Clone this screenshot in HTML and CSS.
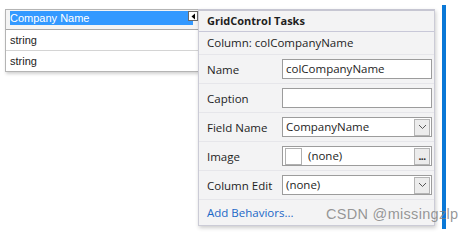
FILE: index.html
```html
<!DOCTYPE html>
<html>
<head>
<meta charset="utf-8">
<link rel="stylesheet" href="styles.css">
</head>
<body>
<div class="stage">
  <div class="grid">
    <div class="grid-head">
      <span class="head-sel">Company Name</span>
      <span class="smart-tag"><svg width="7" height="7" viewBox="0 0 7 7"><path d="M5 0.5 L1.5 3.5 L5 6.5 Z" fill="#000"/></svg></span>
    </div>
    <div class="grid-row">string</div>
    <div class="grid-row">string</div>
  </div>
  <div class="panel">
    <div class="panel-title">GridControl Tasks</div>
    <div class="panel-sub">Column: colCompanyName</div>
    <div class="prow">
      <span class="plabel">Name</span>
      <div class="field">colCompanyName</div>
    </div>
    <div class="prow">
      <span class="plabel">Caption</span>
      <div class="field"></div>
    </div>
    <div class="prow">
      <span class="plabel">Field Name</span>
      <div class="field combo"><span class="ftext">CompanyName</span><span class="btn"><svg width="9" height="6" viewBox="0 0 9 6"><path d="M1 1 L4.5 4.5 L8 1" fill="none" stroke="#555" stroke-width="1"/></svg></span></div>
    </div>
    <div class="prow">
      <span class="plabel">Image</span>
      <div class="field combo"><span class="swatch"></span><span class="ftext">(none)</span><span class="btn dots">...</span></div>
    </div>
    <div class="prow">
      <span class="plabel">Column Edit</span>
      <div class="field combo"><span class="ftext">(none)</span><span class="btn"><svg width="9" height="6" viewBox="0 0 9 6"><path d="M1 1 L4.5 4.5 L8 1" fill="none" stroke="#555" stroke-width="1"/></svg></span></div>
    </div>
    <div class="plink">Add Behaviors...</div>
  </div>
  <div class="bluebar"></div>
</div>
<div class="watermark">CSDN @missingzlp</div>
</body>
</html>
```
FILE: styles.css
```css
html, body {
  margin: 0;
  padding: 0;
  background: #ffffff;
}
body {
  position: relative;
  width: 474px;
  height: 243px;
  overflow: hidden;
}
.stage {
  display: flex;
  align-items: flex-start;
  padding: 9px 0 0 5px;
}
.grid {
  width: 192px;
  border: 1px solid #b4b4b4;
  border-right: none;
  background: #fff;
  box-shadow: 1px 2px 3px rgba(0,0,0,0.18);
  font-family: "Liberation Sans", Arial, sans-serif;
  font-size: 11px;
  color: #222;
}
.grid-head {
  background: #f4f4f4;
  border-bottom: 1px solid #a8a8a8;
  display: flex;
  align-items: flex-start;
  padding: 1px 0 0 4px;
  box-sizing: border-box;
  height: 20px;
}
.head-sel {
  flex: 1;
  background: #3399ff;
  color: #fff;
  height: 14px;
  line-height: 14px;
}
.smart-tag {
  width: 8px;
  height: 8px;
  border: 1px solid #6a6a6a;
  background: #fff;
  display: flex;
  align-items: center;
  justify-content: center;
  margin-left: -5px;
}
.grid-row {
  height: 20px;
  line-height: 20px;
  padding-left: 4px;
  border-bottom: 1px solid #d4d4d4;
}
.grid-row:last-child {
  border-bottom: none;
}
.panel {
  width: 237px;
  height: 217px;
  box-sizing: border-box;
  background: #f3f3f4;
  border: 1px solid #cbcbd6;
  border-top: 2px solid #c6c6d2;
  box-shadow: 1px 2px 4px rgba(0,0,0,0.2);
  font-family: "Open Sans", "Noto Sans", sans-serif;
  font-size: 11.5px;
  color: #1e1e1e;
  display: flex;
  flex-direction: column;
}
.panel-title {
  height: 21px;
  line-height: 20px;
  font-size: 11px;
  font-weight: bold;
  padding-left: 8px;
  border-bottom: 1px solid #c8c8d8;
  box-sizing: border-box;
}
.panel-sub {
  height: 23px;
  line-height: 22px;
  padding-left: 8px;
  border-bottom: 1px solid #e6e6ea;
  box-sizing: border-box;
}
.prow {
  height: 29px;
  display: flex;
  align-items: center;
  padding: 0 2px 0 8px;
  border-bottom: 1px solid #e6e6ea;
  box-sizing: border-box;
}
.plabel {
  width: 75px;
  flex: none;
}
.field {
  width: 150px;
  height: 20px;
  box-sizing: border-box;
  border: 1px solid #9c9c9c;
  background: #fff;
  padding-left: 3px;
  line-height: 18px;
  display: flex;
  align-items: center;
}
.combo {
  padding-right: 1px;
}
.ftext {
  flex: 1;
}
.swatch {
  width: 17px;
  height: 17px;
  border: 1px solid #b0b0b0;
  box-sizing: border-box;
  margin: 0 6px 0 -1px;
  background: #fff;
}
.btn {
  width: 16px;
  height: 17px;
  box-sizing: border-box;
  border: 1px solid #b4b4b4;
  background: #ececec;
  display: flex;
  align-items: center;
  justify-content: center;
}
.dots {
  font-size: 10px;
  line-height: 10px;
  align-items: flex-end;
  padding-bottom: 3px;
  color: #222;
  font-weight: bold;
  letter-spacing: -0.5px;
}
.plink {
  padding: 3px 0 0 8px;
  color: #1b68c7;
  line-height: 20px;
}
.bluebar {
  width: 4px;
  height: 224px;
  margin: -4px 0 0 7px;
  background: #0a78d7;
}
.watermark {
  position: absolute;
  left: 326px;
  top: 206px;
  font-family: "Liberation Sans", Arial, sans-serif;
  font-size: 14.5px;
  color: rgba(125,125,125,0.8);
  letter-spacing: 0.3px;
}
```
